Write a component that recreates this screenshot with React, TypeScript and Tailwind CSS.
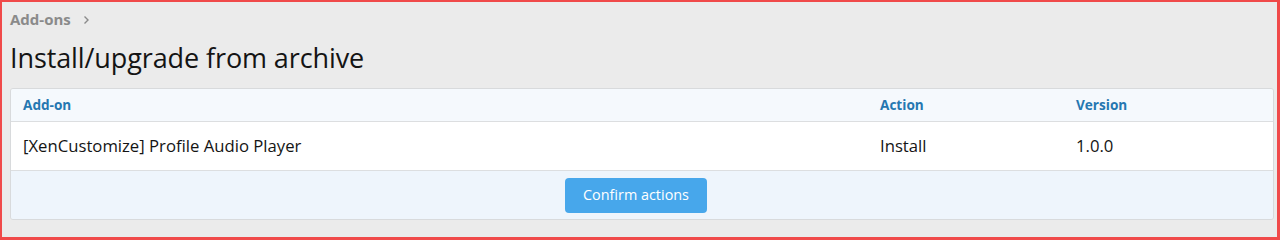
export default function App() {
  const font = { fontFamily: '"Open Sans", "Noto Sans", Arial, sans-serif' };
  return (
    <div
      className="h-[240px] w-[1280px] overflow-hidden bg-[#ebebeb] border-l-2 border-t-2 border-r-[3px] border-b-[3px] border-[#f04a4a] text-[#141414]"
      style={font}
    >
      <div className="pl-2 pr-[3px]">
        {/* Breadcrumb */}
        <div className="flex items-center gap-2 pt-[5px] h-[30px] text-[15px] font-bold text-[#8a8a8a]">
          <span>Add-ons</span>
          <svg width="10" height="10" viewBox="0 0 10 10" className="ml-[2px]">
            <path d="M3.5 1.5 L7 5 L3.5 8.5" fill="none" stroke="#8a8a8a" strokeWidth="1.4" />
          </svg>
        </div>

        {/* Title */}
        <h1 className="text-[27px] leading-[34px] mt-[9px] mb-[13px] font-normal tracking-[-0.1px]">
          Install/upgrade from archive
        </h1>

        {/* Table block */}
        <div className="rounded-[3px] border border-[#d8dadc] overflow-hidden">
          <div className="grid grid-cols-[857px_196px_1fr] h-[33px] items-center bg-[#f5f9fd] border-b border-[#dcdee0] text-[13.6px] font-bold text-[#2577b1]">
            <div className="px-3">Add-on</div>
            <div className="px-3">Action</div>
            <div className="px-3">Version</div>
          </div>
          <div className="grid grid-cols-[857px_196px_1fr] h-[49px] items-center bg-white border-b border-[#dcdee0] text-[16.7px]">
            <div className="px-3">[XenCustomize] Profile Audio Player</div>
            <div className="px-3">Install</div>
            <div className="px-3">1.0.0</div>
          </div>
          <div className="h-[48px] bg-[#eef5fc] flex items-center justify-center pr-[12px]">
            <button className="h-[35px] px-[18px] rounded-[4px] bg-[#47a7eb] text-white text-[14.4px]">
              Confirm actions
            </button>
          </div>
        </div>
      </div>
    </div>
  );
}
